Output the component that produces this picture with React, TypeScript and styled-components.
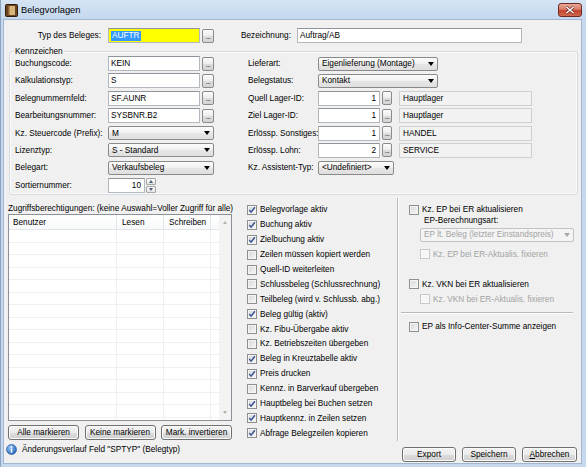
import React from "react";
import styled, { createGlobalStyle } from "styled-components";

const GlobalStyle = createGlobalStyle`
  html, body {
    margin: 0;
    padding: 0;
  }
  body {
    font-family: "Liberation Sans", Arial, sans-serif;
    font-size: 8.25px;
    color: #000;
  }
  * {
    box-sizing: border-box;
  }
`;

const Window = styled.div`
  width: 586px;
  height: 467px;
  display: flex;
  flex-direction: column;
  background: #c5d8ee;
  border-left: 1px solid #8ba3c2;
  overflow: hidden;
`;

const TitleBar = styled.div`
  height: 20px;
  flex: none;
  display: flex;
  align-items: center;
  padding-left: 4px;
  background: linear-gradient(#d6e4f4, #c3d7ee);
`;

const TitleText = styled.span`
  margin-left: 3px;
  font-size: 9.3px;
`;

const CloseButton = styled.div`
  margin-left: auto;
  margin-right: 4px;
  width: 24px;
  height: 14px;
  border: 1px solid #6e2a22;
  border-radius: 3px;
  background: linear-gradient(#e8aa9a, #d77a65 45%, #c4452f 55%, #d0684e);
  display: flex;
  align-items: center;
  justify-content: center;
`;

const Frame = styled.div`
  flex: 1;
  display: flex;
  padding: 0 5px 4px 3px;
`;

const Client = styled.div`
  flex: 1;
  background: #f0f0f0;
  display: flex;
  flex-direction: column;
  box-shadow: 0 0 0 1px #a3b7d1;
`;

/* ---------- generic controls ---------- */

const TextBox = styled.div<{ $w: number; $bg?: string; $right?: boolean }>`
  width: ${(p) => p.$w}px;
  height: 15px;
  flex: none;
  background: ${(p) => p.$bg || "#fff"};
  border: 1px solid #b3b7be;
  border-top-color: #8f939b;
  display: flex;
  align-items: center;
  justify-content: ${(p) => (p.$right ? "flex-end" : "flex-start")};
  padding: 0 3px 0 2px;
  white-space: nowrap;
  overflow: hidden;
`;

const InfoBox = styled.div<{ $w: number }>`
  width: ${(p) => p.$w}px;
  height: 15px;
  flex: none;
  margin-left: 7px;
  background: #f2f2f2;
  border: 1px solid #cfcfcf;
  display: flex;
  align-items: center;
  padding-left: 3px;
  white-space: nowrap;
`;

const Selected = styled.span`
  background: #3399ff;
  color: #fff;
  padding: 0 1px;
  line-height: 10px;
`;

const Dots = styled.div<{ $w?: number }>`
  width: ${(p) => p.$w ?? 12}px;
  height: 14px;
  flex: none;
  margin-left: 2px;
  border: 1px solid #8a8a8a;
  border-radius: 2px;
  background: linear-gradient(#fbfbfb, #ededed 50%, #dedede 50%, #d3d3d3);
  display: flex;
  align-items: flex-end;
  justify-content: center;
  font-size: 7px;
  line-height: 7px;
  padding-bottom: 2px;
  letter-spacing: -0.5px;
`;

const Combo = styled.div<{ $w: number; $disabled?: boolean }>`
  width: ${(p) => p.$w}px;
  height: 14px;
  flex: none;
  border: 1px solid ${(p) => (p.$disabled ? "#c2c2c2" : "#8a8a8a")};
  border-radius: 2px;
  background: ${(p) =>
    p.$disabled
      ? "#f4f4f4"
      : "linear-gradient(#fcfcfc, #f0f0f0 50%, #e6e6e6 50%, #dfdfdf)"};
  color: ${(p) => (p.$disabled ? "#a3a3a3" : "#000")};
  display: flex;
  align-items: center;
  padding-left: 3px;
  white-space: nowrap;
`;

const Arrow = styled.span<{ $disabled?: boolean }>`
  margin-left: auto;
  margin-right: 3px;
  width: 0;
  height: 0;
  border-left: 3.5px solid transparent;
  border-right: 3.5px solid transparent;
  border-top: 4px solid ${(p) => (p.$disabled ? "#a8a8a8" : "#000")};
`;

const FieldRow = styled.div`
  display: flex;
  align-items: center;
  height: 15px;
`;

const SpinArrows = styled.div`
  width: 10px;
  height: 15px;
  margin-left: 1px;
  display: flex;
  flex-direction: column;
  gap: 1px;
`;

const SpinButton = styled.div<{ $up?: boolean }>`
  flex: 1;
  border: 1px solid #a6a6a6;
  border-radius: 1px;
  background: linear-gradient(#fafafa, #e4e4e4);
  display: flex;
  align-items: center;
  justify-content: center;
  &::after {
    content: "";
    border-left: 2.5px solid transparent;
    border-right: 2.5px solid transparent;
    ${(p) => (p.$up ? "border-bottom" : "border-top")}: 3px solid #4c607a;
  }
`;

const Button = styled.button<{ $w: number }>`
  width: ${(p) => p.$w}px;
  height: 15px;
  padding: 0;
  font: inherit;
  color: #000;
  border: 1px solid #707070;
  border-radius: 3px;
  background: linear-gradient(#f3f3f3, #ebebeb 50%, #dddddd 50%, #cfcfcf);
  box-shadow: inset 0 0 0 1px #fbfbfb;
  display: flex;
  align-items: center;
  justify-content: center;
`;

/* ---------- check boxes ---------- */

const CheckRow = styled.div<{ $indent?: number; $disabled?: boolean }>`
  display: flex;
  align-items: center;
  gap: 3px;
  height: 14.9px;
  padding-left: ${(p) => p.$indent ?? 0}px;
  color: ${(p) => (p.$disabled ? "#a3a3a3" : "#000")};
  white-space: nowrap;
`;

const Box = styled.span<{ $disabled?: boolean }>`
  width: 10px;
  height: 10px;
  flex: none;
  border: 1px solid ${(p) => (p.$disabled ? "#c8c8c8" : "#8e8f8f")};
  background: ${(p) =>
    p.$disabled ? "#f6f6f6" : "linear-gradient(135deg, #d3d5d9, #f9f9f9)"};
  box-shadow: inset 0 0 0 1px ${(p) => (p.$disabled ? "#fafafa" : "#f4f4f4")};
  display: flex;
  align-items: center;
  justify-content: center;
`;

const Check = ({
  label,
  checked,
  disabled,
  indent,
}: {
  label: string;
  checked?: boolean;
  disabled?: boolean;
  indent?: number;
}) => (
  <CheckRow $indent={indent} $disabled={disabled}>
    <Box $disabled={disabled}>
      {checked && (
        <svg width="8" height="8" viewBox="0 0 8 8">
          <path
            d="M1.2 4.1 L3.1 6.2 L6.9 1.3"
            fill="none"
            stroke="#3a5390"
            strokeWidth="1.5"
          />
        </svg>
      )}
    </Box>
    <span>{label}</span>
  </CheckRow>
);

/* ---------- top row ---------- */

const TopRow = styled.div`
  display: flex;
  align-items: center;
  height: 15px;
  margin-top: 8px;
  padding-left: 4px;
`;

const TopLabel = styled.span<{ $w: number; $right?: boolean; $ml?: number }>`
  width: ${(p) => p.$w}px;
  margin-left: ${(p) => p.$ml ?? 0}px;
  text-align: ${(p) => (p.$right ? "right" : "left")};
  padding-right: ${(p) => (p.$right ? 7 : 0)}px;
  white-space: nowrap;
`;

/* ---------- group box ---------- */

const Group = styled.div`
  position: relative;
  margin: 8px 3px 0 5px;
  height: 144px;
  border: 1px solid #d5dbe1;
  border-radius: 3px;
  box-shadow: inset 0 0 0 1px #fbfbfb;
  padding: 4px 0 0 5px;
`;

const Legend = styled.span`
  position: absolute;
  left: 4px;
  top: -6px;
  padding: 0 1px;
  background: #f0f0f0;
  line-height: 11px;
`;

const GroupGrid = styled.div`
  display: grid;
  grid-template-columns: 93px 140px 70px 1fr;
  grid-auto-rows: 15px;
  row-gap: 2.4px;
  align-items: center;
`;

const Label = styled.span`
  white-space: nowrap;
`;

/* ---------- lower area ---------- */

const Lower = styled.div`
  display: grid;
  grid-template-columns: 224px 165px 1px 1fr;
  height: 246px;
  padding: 0 3px 0 4px;
`;

const LeftCol = styled.div`
  padding-top: 7.5px;
  display: flex;
  flex-direction: column;
`;

const ListCaption = styled.div`
  height: 11.5px;
  line-height: 11px;
  white-space: nowrap;
`;

const ListView = styled.div`
  height: 207px;
  border: 1px solid #8c9199;
  background: #fff;
  display: flex;
`;

const ListMain = styled.div`
  flex: 1;
  display: flex;
  flex-direction: column;
  overflow: hidden;
`;

const ListHeader = styled.div`
  display: flex;
  height: 15px;
  flex: none;
  background: linear-gradient(#ffffff, #f7f8f9);
  border-bottom: 1px solid #e3e5e8;
`;

const HeadCell = styled.div<{ $w: number; $pad?: number }>`
  width: ${(p) => p.$w}px;
  flex: none;
  padding-left: ${(p) => p.$pad ?? 5}px;
  border-right: 1px solid #e3e5e8;
  display: flex;
  align-items: center;
`;

const ListRow = styled.div`
  display: flex;
  height: 12.5px;
  flex: none;
  border-bottom: 1px solid #f0f0f0;
`;

const Cell = styled.div<{ $w: number }>`
  width: ${(p) => p.$w}px;
  flex: none;
  border-right: 1px solid #f0f0f0;
`;

const ScrollBar = styled.div`
  width: 12px;
  flex: none;
  background: #f3f3f3;
  display: flex;
  flex-direction: column;
  justify-content: space-between;
`;

const ScrollArrow = styled.div<{ $up?: boolean }>`
  height: 15px;
  display: flex;
  align-items: center;
  justify-content: center;
  &::after {
    content: "";
    border-left: 2.5px solid transparent;
    border-right: 2.5px solid transparent;
    ${(p) => (p.$up ? "border-bottom" : "border-top")}: 3px solid #b4b4b4;
  }
`;

const ListButtons = styled.div`
  display: flex;
  justify-content: space-between;
  margin-top: 4px;
`;

const MidCol = styled.div`
  padding: 7.5px 0 0 15px;
`;

const VSep = styled.div`
  margin-top: 3px;
  background: #b9b9b9;
  box-shadow: 1px 0 0 #fff;
`;

const RightCol = styled.div`
  padding: 7.5px 0 0 11px;
  display: flex;
  flex-direction: column;
`;

const SubLabel = styled.div`
  padding-left: 15px;
  height: 10px;
  line-height: 10px;
  margin-top: -1px;
  margin-bottom: 1.5px;
`;

const HSep = styled.div`
  margin: 5.5px 0 0 -8px;
  width: 172px;
  height: 2px;
  border-top: 1px solid #b9b9b9;
  border-bottom: 1px solid #fff;
`;

const Spacer = styled.div<{ $h: number }>`
  height: ${(p) => p.$h}px;
  flex: none;
`;

/* ---------- footer ---------- */

const Footer = styled.div`
  flex: 1;
  display: flex;
  padding: 0 4px 0 2px;
`;

const Status = styled.div`
  display: flex;
  align-items: center;
  gap: 5px;
  height: 12px;
  margin-top: 2px;
  white-space: nowrap;
`;

const FooterButtons = styled.div`
  margin-left: auto;
  margin-top: 6px;
  display: flex;
  gap: 6px;
`;

const AppIcon = () => (
  <svg width="13" height="13" viewBox="0 0 13 13">
    <rect x="0.5" y="0.5" width="12" height="12" rx="1" fill="#6b4423" stroke="#2e1c0c" />
    <rect x="3" y="2" width="7" height="9" fill="#d8b67a" />
    <rect x="3" y="2" width="1.5" height="9" fill="#8f6336" />
  </svg>
);

const InfoIcon = () => (
  <svg width="11" height="11" viewBox="0 0 11 11">
    <defs>
      <radialGradient id="ig" cx="0.35" cy="0.3" r="0.8">
        <stop offset="0" stopColor="#8fc3f5" />
        <stop offset="1" stopColor="#1f5fb8" />
      </radialGradient>
    </defs>
    <circle cx="5.5" cy="5.5" r="5" fill="url(#ig)" stroke="#1b4f98" strokeWidth="0.6" />
    <circle cx="5.5" cy="3" r="0.9" fill="#fff" />
    <rect x="4.7" y="4.5" width="1.6" height="4.2" fill="#fff" />
  </svg>
);

const checks: [string, boolean][] = [
  ["Belegvorlage aktiv", true],
  ["Buchung aktiv", true],
  ["Zielbuchung aktiv", true],
  ["Zeilen müssen kopiert werden", false],
  ["Quell-ID weiterleiten", false],
  ["Schlussbeleg (Schlussrechnung)", false],
  ["Teilbeleg (wird v. Schlussb. abg.)", false],
  ["Beleg gültig (aktiv)", true],
  ["Kz. Fibu-Übergabe aktiv", false],
  ["Kz. Betriebszeiten übergeben", false],
  ["Beleg in Kreuztabelle aktiv", true],
  ["Preis drucken", true],
  ["Kennz. in Barverkauf übergeben", false],
  ["Hauptbeleg bei Buchen setzen", true],
  ["Hauptkennz. in Zeilen setzen", true],
  ["Abfrage Belegzeilen kopieren", true],
];

const cols = [108, 47, 47, 8];

const Lookup = ({ value }: { value: string }) => (
  <FieldRow>
    <TextBox $w={92}>{value}</TextBox>
    <Dots>...</Dots>
  </FieldRow>
);

const IdLookup = ({ id, name }: { id: string; name: string }) => (
  <FieldRow>
    <TextBox $w={62} $right>
      {id}
    </TextBox>
    <Dots $w={10}>...</Dots>
    <InfoBox $w={133}>{name}</InfoBox>
  </FieldRow>
);

const Select = ({ value, w }: { value: string; w: number }) => (
  <Combo $w={w}>
    {value}
    <Arrow />
  </Combo>
);

export default function App() {
  return (
    <>
      <GlobalStyle />
      <Window>
        <TitleBar>
          <AppIcon />
          <TitleText>Belegvorlagen</TitleText>
          <CloseButton>
            <svg width="10" height="8" viewBox="0 0 10 8">
              <path d="M1.5 1 L8.5 7 M8.5 1 L1.5 7" stroke="#5a1d14" strokeWidth="2.6" />
              <path d="M1.5 1 L8.5 7 M8.5 1 L1.5 7" stroke="#fff" strokeWidth="1.6" />
            </svg>
          </CloseButton>
        </TitleBar>
        <Frame>
          <Client>
            <TopRow>
              <TopLabel $w={100} $right>
                Typ des Beleges:
              </TopLabel>
              <TextBox $w={92} $bg="#ffff00">
                <Selected>AUFTR</Selected>
              </TextBox>
              <Dots>...</Dots>
              <TopLabel $w={56} $ml={27}>
                Bezeichnung:
              </TopLabel>
              <TextBox $w={225}>Auftrag/AB</TextBox>
            </TopRow>

            <Group>
              <Legend>Kennzeichen</Legend>
              <GroupGrid>
                <Label>Buchungscode:</Label>
                <Lookup value="KEIN" />
                <Label>Lieferart:</Label>
                <Select value="Eigenlieferung (Montage)" w={120} />

                <Label>Kalkulationstyp:</Label>
                <Lookup value="S" />
                <Label>Belegstatus:</Label>
                <Select value="Kontakt" w={120} />

                <Label>Belegnummernfeld:</Label>
                <Lookup value="SF.AUNR" />
                <Label>Quell Lager-ID:</Label>
                <IdLookup id="1" name="Hauptlager" />

                <Label>Bearbeitungsnummer:</Label>
                <Lookup value="SYSBNR.B2" />
                <Label>Ziel Lager-ID:</Label>
                <IdLookup id="1" name="Hauptlager" />

                <Label>Kz. Steuercode (Prefix):</Label>
                <Select value="M" w={106} />
                <Label>Erlössp. Sonstiges:</Label>
                <IdLookup id="1" name="HANDEL" />

                <Label>Lizenztyp:</Label>
                <Select value="S - Standard" w={106} />
                <Label>Erlössp. Lohn:</Label>
                <IdLookup id="2" name="SERVICE" />

                <Label>Belegart:</Label>
                <Select value="Verkaufsbeleg" w={106} />
                <Label>Kz. Assistent-Typ:</Label>
                <Select value="<Undefiniert>" w={76} />

                <Label>Sortiernummer:</Label>
                <FieldRow>
                  <TextBox $w={37} $right>
                    10
                  </TextBox>
                  <SpinArrows>
                    <SpinButton $up />
                    <SpinButton />
                  </SpinArrows>
                </FieldRow>
                <span />
                <span />
              </GroupGrid>
            </Group>

            <Lower>
              <LeftCol>
                <ListCaption>
                  Zugriffsberechtigungen: (keine Auswahl=Voller Zugriff für alle)
                </ListCaption>
                <ListView>
                  <ListMain>
                    <ListHeader>
                      <HeadCell $w={cols[0]} $pad={4}>
                        Benutzer
                      </HeadCell>
                      <HeadCell $w={cols[1]}>Lesen</HeadCell>
                      <HeadCell $w={cols[2]}>Schreiben</HeadCell>
                    </ListHeader>
                    {Array.from({ length: 16 }).map((_, i) => (
                      <ListRow key={i}>
                        {cols.slice(0, 3).map((w, j) => (
                          <Cell key={j} $w={w} />
                        ))}
                      </ListRow>
                    ))}
                  </ListMain>
                  <ScrollBar>
                    <ScrollArrow $up />
                    <ScrollArrow />
                  </ScrollBar>
                </ListView>
                <ListButtons>
                  <Button $w={71}>Alle markieren</Button>
                  <Button $w={71}>Keine markieren</Button>
                  <Button $w={71}>Mark. invertieren</Button>
                </ListButtons>
              </LeftCol>

              <MidCol>
                {checks.map(([label, on]) => (
                  <Check key={label} label={label} checked={on} />
                ))}
              </MidCol>

              <VSep />

              <RightCol>
                <Check label="Kz. EP bei ER aktualisieren" />
                <SubLabel>EP-Berechnungsart:</SubLabel>
                <Combo $w={154} $disabled style={{ marginLeft: 11 }}>
                  EP lt. Beleg (letzter Einstandspreis)
                  <Arrow $disabled />
                </Combo>
                <Spacer $h={5} />
                <Check label="Kz. EP bei ER-Aktualis. fixieren" disabled indent={11} />
                <Spacer $h={15} />
                <Check label="Kz. VKN bei ER aktualisieren" />
                <Check label="Kz. VKN bei ER-Aktualis. fixieren" disabled indent={11} />
                <HSep />
                <Spacer $h={5} />
                <Check label="EP als Info-Center-Summe anzeigen" />
              </RightCol>
            </Lower>

            <Footer>
              <Status>
                <InfoIcon />
                <span>Änderungsverlauf Feld "SPTYP" (Belegtyp)</span>
              </Status>
              <FooterButtons>
                <Button $w={54}>Export</Button>
                <Button $w={54}>Speichern</Button>
                <Button $w={55}>
                  <span>
                    <u>A</u>bbrechen
                  </span>
                </Button>
              </FooterButtons>
            </Footer>
          </Client>
        </Frame>
      </Window>
    </>
  );
}
